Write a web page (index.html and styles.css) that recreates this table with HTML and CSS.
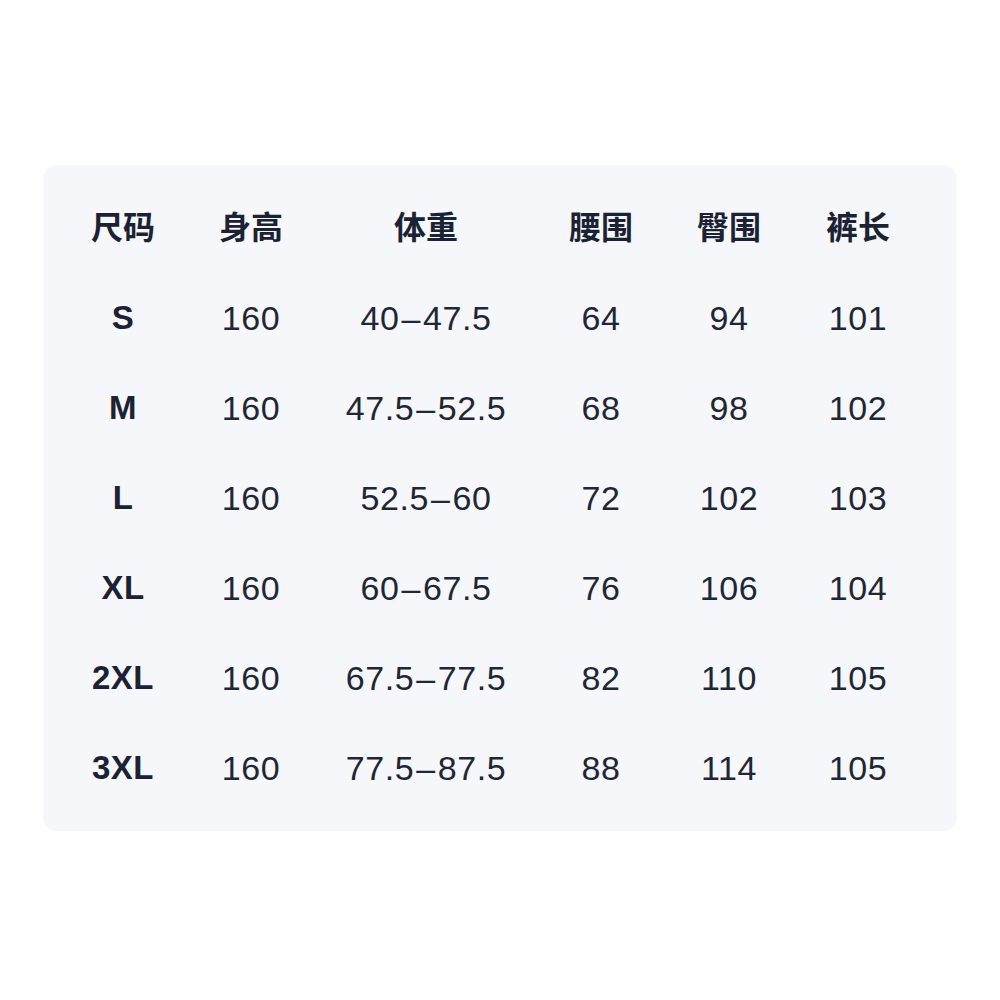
FILE: index.html
```html
<!DOCTYPE html>
<html lang="zh">
<head>
<meta charset="utf-8">
<link rel="stylesheet" href="styles.css">
</head>
<body>
<div class="card">
  <div class="grid">
    <div class="cell head">尺码</div><div class="cell head">身高</div><div class="cell head">体重</div><div class="cell head">腰围</div><div class="cell head">臀围</div><div class="cell head">裤长</div>
    <div class="cell size">S</div><div class="cell">160</div><div class="cell">40<span class="dash">–</span>47.5</div><div class="cell">64</div><div class="cell">94</div><div class="cell">101</div>
    <div class="cell size">M</div><div class="cell">160</div><div class="cell">47.5<span class="dash">–</span>52.5</div><div class="cell">68</div><div class="cell">98</div><div class="cell">102</div>
    <div class="cell size">L</div><div class="cell">160</div><div class="cell">52.5<span class="dash">–</span>60</div><div class="cell">72</div><div class="cell">102</div><div class="cell">103</div>
    <div class="cell size">XL</div><div class="cell">160</div><div class="cell">60<span class="dash">–</span>67.5</div><div class="cell">76</div><div class="cell">106</div><div class="cell">104</div>
    <div class="cell size">2XL</div><div class="cell">160</div><div class="cell">67.5<span class="dash">–</span>77.5</div><div class="cell">82</div><div class="cell">110</div><div class="cell">105</div>
    <div class="cell size">3XL</div><div class="cell">160</div><div class="cell">77.5<span class="dash">–</span>87.5</div><div class="cell">88</div><div class="cell">114</div><div class="cell">105</div>
  </div>
</div>
</body>
</html>
```
FILE: styles.css
```css
html, body {
  margin: 0;
  padding: 0;
  background: #ffffff;
}
body {
  padding: 165px 43px 0 43px;
  font-family: "Liberation Sans", "Noto Sans CJK SC", sans-serif;
  color: #1b2233;
}
.card {
  width: 914px;
  height: 666px;
  box-sizing: border-box;
  background: #f5f7fa;
  border-radius: 14px;
  padding: 18px 34px 18px 16px;
}
.grid {
  display: grid;
  grid-template-columns: 128px 128px 222px 128px 128px 130px;
  grid-auto-rows: 90px;
}
.cell {
  display: flex;
  align-items: center;
  justify-content: center;
  font-size: 34px;
  font-weight: 400;
  letter-spacing: 0.6px;
  color: #1f2636;
}
.dash {
  margin: 0 2px;
}
.head {
  font-family: "Noto Sans CJK SC", sans-serif;
  font-weight: 700;
  font-size: 32px;
  letter-spacing: 0;
  color: #1b2233;
  padding-bottom: 7px;
}
.size {
  font-weight: 700;
  font-size: 33px;
  letter-spacing: 0.5px;
  color: #1b2233;
}
```
